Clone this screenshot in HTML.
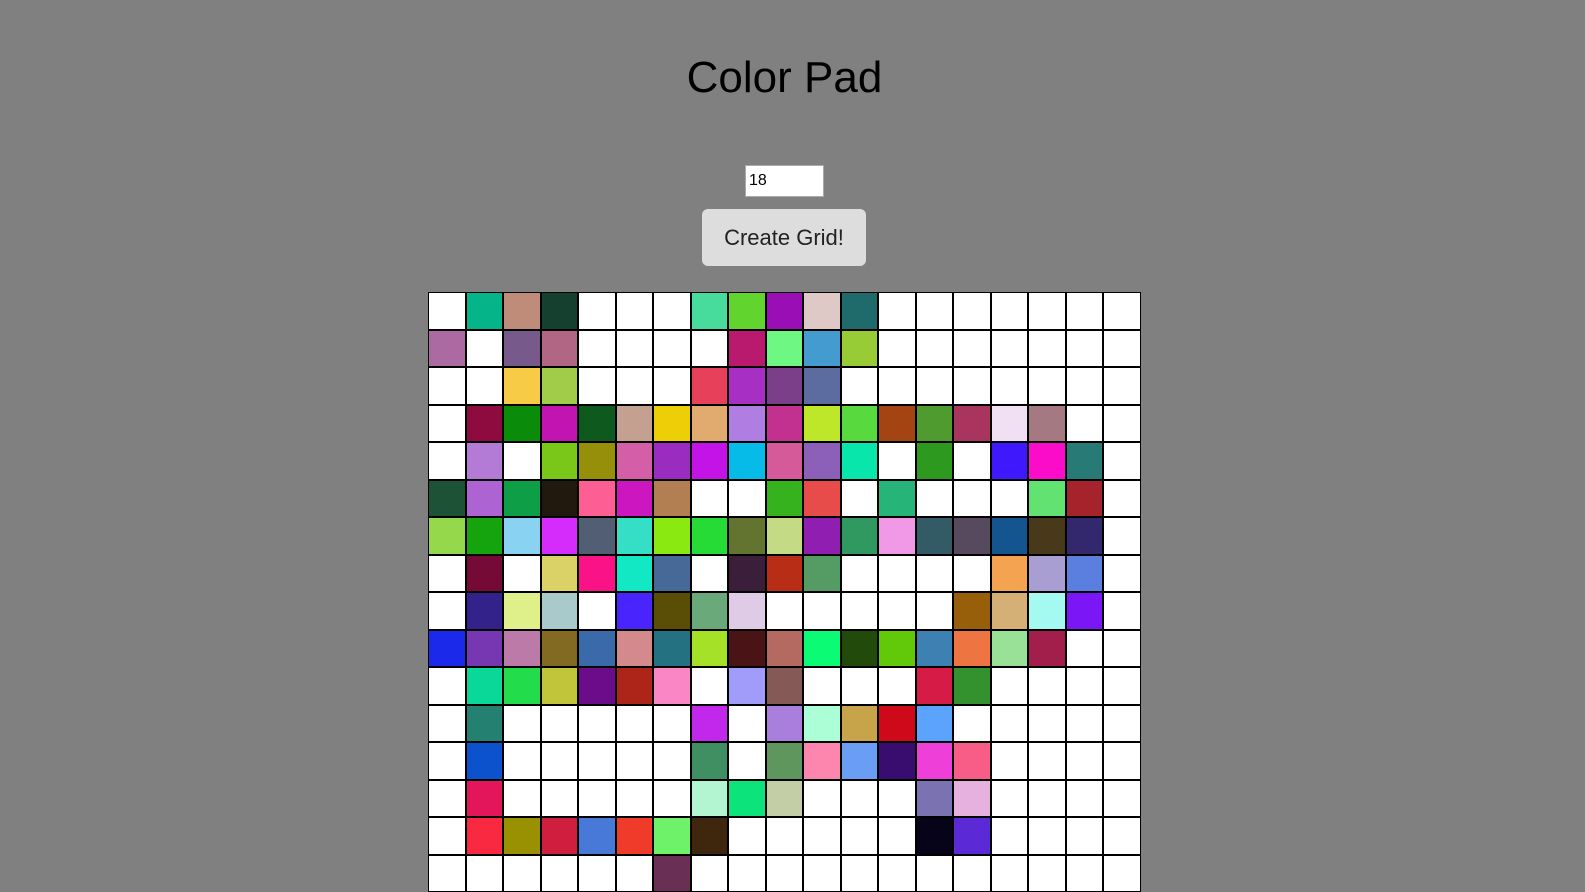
<!DOCTYPE html>
<html><head><meta charset="utf-8"><style>
html,body{margin:0;padding:0;background:#808080;width:1585px;height:891px;overflow:hidden;font-family:"Liberation Sans",Arial,sans-serif}
h1{position:absolute;left:-8px;width:1585px;top:50px;margin:0;text-align:center;font-weight:normal;font-size:44px;color:#000;line-height:56px}
.inp{position:absolute;left:745px;top:165px;width:79px;height:32px;background:#fff;border:1px solid #aaa;box-sizing:border-box;font-size:16px;line-height:30px;padding-left:3px;color:#000}
.btn{position:absolute;left:702px;top:209px;width:164px;height:57px;background:#ddd;border-radius:6px;font-size:22px;line-height:57px;text-align:center;color:#222}
.g{position:absolute;left:428px;top:292px;width:713px;display:grid;grid-template-columns:repeat(19,1fr);grid-auto-rows:37.5px}
.g div{border:1px solid #000;background:#fff}
</style></head><body>
<h1>Color Pad</h1>
<div class="inp">18</div>
<div class="btn">Create Grid!</div>
<div class="g" id="g"></div>
<script>
var rows=[
"w,#06b48a,#c08c7a,#153f2e,w,w,w,#48dc9c,#62d42e,#9a0eb6,#dec9c6,#1f6b6b,w,w,w,w,w,w,w",
"#ab6ba2,w,#78598b,#b16684,w,w,w,w,#b91a6e,#6ff783,#449bd0,#98cc36,w,w,w,w,w,w,w",
"w,w,#f7cb45,#a1cc4a,w,w,w,#e6405a,#a72fc3,#7a3f88,#5d6c9e,w,w,w,w,w,w,w,w",
"w,#8e0b40,#0a8c0a,#c214b0,#0e591e,#c3a090,#eccf06,#e1aa6e,#b07ee2,#c33190,#bde728,#58d93d,#a54413,#4f9b30,#a9355f,#f1e0f3,#a47982,w,w",
"w,#b37ad6,w,#7ac71a,#958f0a,#d45ea8,#9a2dc0,#c413e6,#07bbe9,#d45a9a,#8c5fb8,#08e6ac,w,#2d991e,w,#3f18fb,#fb0cc8,#287a77,w",
"#1e5236,#ae63d2,#0e9f46,#21180e,#fd5f95,#cc16c0,#b27f52,w,w,#37b21f,#e84c4a,w,#27b478,w,w,w,#62e270,#a5242c,w",
"#96d84c,#15a40e,#8ad2f1,#d52cfb,#525e73,#35dfc5,#8ae911,#27db37,#637431,#c4da84,#901fb1,#2f9960,#f09ae7,#325b66,#584a5e,#145590,#47391a,#33276e,w",
"w,#740a35,w,#dbd267,#fa1386,#12e8c3,#466998,w,#3a1e3a,#b82d16,#549c64,w,w,w,w,#f4a450,#a99ed2,#5b7fdf,w",
"w,#34228b,#dff08a,#a8cacb,w,#4a24fc,#5a4e06,#6aaa7a,#e0cbe6,w,w,w,w,w,#985f0a,#d4b077,#a4f9f0,#7b17f6,w",
"#1b2aea,#7837b2,#bb7aa8,#826a22,#3b6aab,#d48a8c,#237181,#a4e127,#4a1416,#b46a60,#0bfb75,#224a0a,#62c90a,#3d81b2,#ee7442,#98e196,#a21f4c,w,w",
"w,#0ad898,#22dc4b,#c1c53a,#6b0d8a,#ad2418,#fa86c6,w,#a19cfa,#855a56,w,w,w,#d61c46,#33922d,w,w,w,w",
"w,#248070,w,w,w,w,w,#c128eb,w,#a87fdd,#abfed6,#c7a449,#ce0a1a,#5ca3fe,w,w,w,w,w",
"w,#0c52cd,w,w,w,w,w,#3f8f62,w,#5f965e,#fd86ae,#6a9ef4,#390d70,#ee40d8,#f75d86,w,w,w,w",
"w,#e3165c,w,w,w,w,w,#b3f5d0,#0ce37a,#c3cda6,w,w,w,#7b72b1,#e6b1dc,w,w,w,w",
"w,#f82940,#9a9102,#cf1e3e,#4979d8,#f03a2a,#6ef26a,#3e270d,w,w,w,w,w,#07041a,#5b29d6,w,w,w,w",
"w,w,w,w,w,w,#692f55,w,w,w,w,w,w,w,w,w,w,w,w"];
var h="";rows.forEach(function(r){r.split(",").forEach(function(c){h+=c=="w"?"<div></div>":'<div style="background:'+c+'"></div>';});});
document.getElementById("g").innerHTML=h;
</script>
</body></html>
